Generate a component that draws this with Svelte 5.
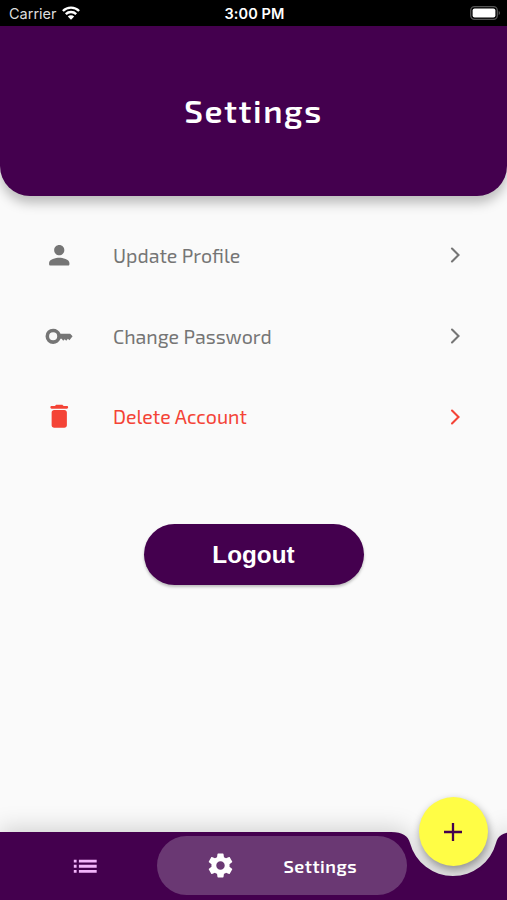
<script lang="ts">
    type MenuItem = { id: string; label: string; icon: string; danger?: boolean };

    const items: MenuItem[] = [
        {
            id: 'profile',
            label: 'Update Profile',
            icon: 'M12 12c2.21 0 4-1.79 4-4s-1.79-4-4-4-4 1.79-4 4 1.79 4 4 4zm0 2c-2.67 0-8 1.34-8 4v1c0 .55.45 1 1 1h14c.55 0 1-.45 1-1v-1c0-2.66-5.33-4-8-4z',
        },
        {
            id: 'password',
            label: 'Change Password',
            icon: 'M13 10C12.1 7.6 9.9 6 7.2 6a6 6 0 1 0 0 12c2.7 0 4.9-1.6 5.800-4h.9l1.2 1.6 1.2-1.300 1.2 1.300 1.300-1.600 1.200 1.200L22.500 12 20.600 10zM7.200 15.200a3.200 3.200 0 1 1 0-6.400 3.200 3.200 0 0 1 0 6.400z',
        },
        {
            id: 'delete',
            label: 'Delete Account',
            icon: 'M6 19c0 1.1.9 2 2 2h8c1.1 0 2-.9 2-2V9c0-1.1-.9-2-2-2H8c-1.1 0-2 .9-2 2v10zM18 4h-2.5l-.71-.71c-.18-.18-.44-.29-.7-.29H9.91c-.26 0-.52.11-.7.29L8.5 4H6c-.55 0-1 .45-1 1s.45 1 1 1h12c.55 0 1-.45 1-1s-.45-1-1-1z',
            danger: true,
        },
    ];

    let activeTab = $state('settings');
</script>

<div class="screen">
    <div class="status">
        <div class="carrier">
            <span>Carrier</span>
            <svg width="18" height="14" viewBox="0 0 18 14">
                <path
                    d="M.9 5a11.5 11.5 0 0 1 16.2 0M3.8 8.1a7.4 7.4 0 0 1 10.4 0"
                    fill="none"
                    stroke="#fff"
                    stroke-width="2.4"
                />
                <path d="M9 13.7 5.8 10.5a4.5 4.5 0 0 1 6.4 0z" fill="#fff" />
            </svg>
        </div>
        <span class="time">3:00 PM</span>
        <div class="battery">
            <svg width="31" height="14" viewBox="0 0 31 14">
                <rect x=".7" y=".7" width="26.6" height="12.6" rx="3.8" fill="none" stroke="#555" stroke-width="1.3" />
                <rect x="2.6" y="2.6" width="22.8" height="8.8" rx="2" fill="#fff" />
                <path d="M28.7 5c1.8.6 1.8 3.4 0 4z" fill="#555" />
            </svg>
        </div>
    </div>

    <header>
        <h1>Settings</h1>
    </header>

    <main>
        <ul>
            {#each items as item (item.id)}
                <li class:danger={item.danger}>
                    <svg class="icon" viewBox="0 0 24 24"><path d={item.icon} /></svg>
                    <span class="label">{item.label}</span>
                    <svg class="chevron" viewBox="0 0 10 16">
                        <path d="M1.5 1.5 8 8l-6.5 6.5" />
                    </svg>
                </li>
            {/each}
        </ul>
        <button class="logout">Logout</button>
    </main>

    <nav>
        <!-- bar with the notch cut out for the floating button -->
        <svg class="bar" width="507" height="69" viewBox="0 0 507 69">
            <path
                d="M0 0H391C403 0 408 4 410 11A44.5 44.5 0 0 0 496 11C498 4 502 0 515 0V69H0z"
            />
        </svg>
        <button class="tab list" aria-label="List" onclick={() => (activeTab = 'list')}>
            <svg class="icon" viewBox="0 0 24 24">
                <path
                    d="M3 6.800h2.200v2.200H3zM3 10.900h2.200v2.200H3zM3 15h2.200v2.200H3zM7 6.800h14v2.200H7zM7 10.900h14v2.200H7zM7 15h14v2.200H7z"
                />
            </svg>
        </button>
        <button
            class="tab settings"
            class:active={activeTab === 'settings'}
            onclick={() => (activeTab = 'settings')}
        >
            <svg class="icon gear" viewBox="0 0 24 24">
                <path
                    d="M19.43 12.98c.04-.32.07-.64.07-.98s-.03-.66-.07-.98l2.11-1.65c.19-.15.24-.42.12-.64l-2-3.46c-.12-.22-.39-.3-.61-.22l-2.49 1c-.52-.4-1.08-.73-1.69-.98l-.38-2.65C14.46 2.18 14.25 2 14 2h-4c-.25 0-.46.18-.49.42l-.38 2.65c-.61.25-1.17.59-1.69.98l-2.49-1c-.23-.09-.49 0-.61.22l-2 3.46c-.13.22-.07.49.12.64l2.11 1.65c-.04.32-.07.65-.07.98s.03.66.07.98l-2.11 1.65c-.19.15-.24.42-.12.64l2 3.46c.12.22.39.3.61.22l2.49-1c.52.4 1.08.73 1.69.98l.38 2.65c.03.24.24.42.49.42h4c.25 0 .46-.18.49-.42l.38-2.65c.61-.25 1.17-.59 1.69-.98l2.49 1c.23.09.49 0 .61-.22l2-3.46c.12-.22.07-.49-.12-.64l-2.11-1.65zM12 15.5c-1.93 0-3.5-1.57-3.5-3.5s1.57-3.5 3.5-3.5 3.5 1.57 3.5 3.5-1.57 3.5-3.5 3.5z"
                />
            </svg>
            <span>Settings</span>
        </button>
        <button class="fab" aria-label="Add">
            <svg width="18" height="18" viewBox="0 0 18 18">
                <path d="M9 0v18M0 9h18" stroke="#44004e" stroke-width="2.3" />
            </svg>
        </button>
    </nav>
</div>

<style>
    :global(body) {
        margin: 0;
        background: #fafafa;
    }

    .screen {
        display: flex;
        flex-direction: column;
        width: 507px;
        height: 900px;
        overflow: hidden;
        background: #fafafa;
        font-family: 'Exo 2', 'Open Sans', sans-serif;
    }

    button {
        border: 0;
        padding: 0;
        font-family: inherit;
        cursor: pointer;
    }

    svg {
        display: block;
        flex-shrink: 0;
    }

    .status {
        display: grid;
        grid-template-columns: 1fr auto 1fr;
        align-items: center;
        height: 26px;
        padding: 1px 7px 0 9px;
        box-sizing: border-box;
        background: #000;
        color: #fff;
        font: 14.5px Inter, sans-serif;
    }

    .carrier {
        display: flex;
        align-items: center;
        gap: 5px;
        color: #ddd;
    }

    .carrier svg {
        margin-top: -2px;
    }

    .time {
        font-weight: 600;
        letter-spacing: 0.1px;
    }

    .battery {
        justify-self: end;
        margin: -1px -1px 0 0;
    }

    header {
        display: flex;
        align-items: center;
        justify-content: center;
        height: 170px;
        background: #44004e;
        border-radius: 0 0 30px 30px;
        box-shadow: 0 7px 12px rgba(0, 0, 0, 0.25);
    }

    h1 {
        margin: 0;
        color: #fff;
        font-size: 32.5px;
        font-weight: 600;
        line-height: 40px;
        letter-spacing: 1.6px;
    }

    main {
        flex: 1;
        display: flex;
        flex-direction: column;
        align-items: center;
    }

    ul {
        align-self: stretch;
        margin: 0;
        padding: 19px 46.5px 0 44px;
        list-style: none;
    }

    li {
        display: flex;
        align-items: center;
        height: 80.7px;
        color: #757575;
        font-size: 19.6px;
    }

    .danger {
        color: #f44336;
    }

    .icon {
        width: 30.5px;
        height: 30.5px;
        fill: currentColor;
    }

    .label {
        flex: 1;
        padding: 0 0 1px 38.5px;
    }

    .chevron {
        width: 11px;
        height: 16px;
        fill: none;
        stroke: currentColor;
        stroke-width: 2.1;
        stroke-linecap: round;
    }

    .logout {
        width: 220px;
        height: 61px;
        margin-top: 67px;
        border-radius: 31px;
        background: #44004e;
        color: #fff;
        font: bold 24.3px 'Liberation Sans', sans-serif;
        box-shadow: 0 2px 3px rgba(0, 0, 0, 0.25);
    }

    nav {
        position: relative;
        display: flex;
        align-items: center;
        height: 68.5px;
    }

    .bar {
        position: absolute;
        inset: 0;
        overflow: visible;
        fill: #44004e;
        filter: drop-shadow(0 -4px 11px rgba(0, 0, 0, 0.16));
    }

    .tab {
        position: relative;
        display: flex;
        align-items: center;
        height: 59px;
        background: none;
        color: #f3b4fb;
    }

    .list {
        justify-content: center;
        width: 144px;
        margin: 0 0 0 13px;
    }

    .settings {
        width: 250px;
        padding-left: 48.5px;
        border-radius: 30px;
        gap: 49px;
        font-size: 18px;
        font-weight: 600;
        letter-spacing: 0.5px;
        color: #fff;
    }

    .gear {
        width: 29px;
        height: 29px;
    }

    .active {
        background: #6a3873;
    }

    .fab {
        position: absolute;
        left: 418.5px;
        top: -34.5px;
        display: flex;
        align-items: center;
        justify-content: center;
        width: 69px;
        height: 69px;
        border-radius: 50%;
        background: #fffd45;
        box-shadow: 1px 4px 9px rgba(0, 0, 0, 0.4);
    }
</style>
